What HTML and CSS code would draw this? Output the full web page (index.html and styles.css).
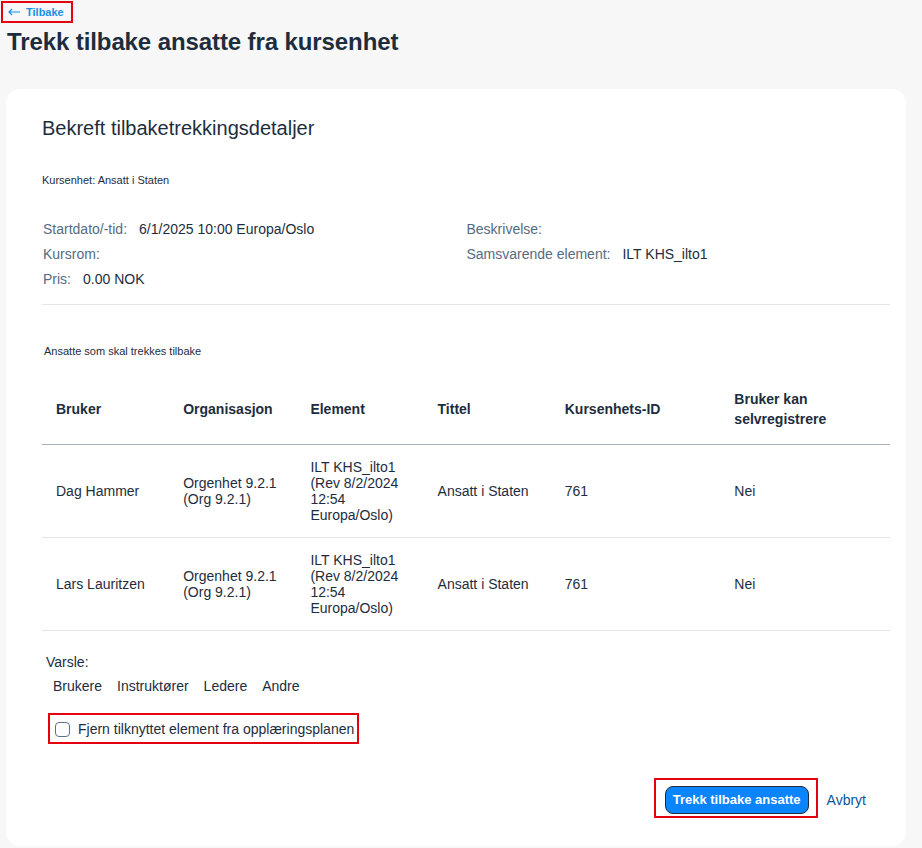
FILE: index.html
```html
<!DOCTYPE html>
<html lang="nb">
	<head>
		<meta charset="UTF-8" />
		<meta name="viewport" content="width=device-width, initial-scale=1.0" />
		<title>Trekk tilbake ansatte fra kursenhet</title>
		<link rel="stylesheet" href="styles.css">
	</head>
	<body>
		<div class="page">
			<a class="back-link" href="#">
				<svg class="back-arrow" width="12" height="8" viewBox="0 0 12 8" fill="none" stroke="currentColor" stroke-width="1.2">
					<path d="M12 4H1M4 1L1 4l3 3" />
				</svg>
				Tilbake
			</a>
			<h1>Trekk tilbake ansatte fra kursenhet</h1>

			<div class="card">
				<h2>Bekreft tilbaketrekkingsdetaljer</h2>
				<p class="small-label">Kursenhet: Ansatt i Staten</p>

				<div class="details">
					<div class="details-col">
						<div class="detail"><span class="label">Startdato/-tid:</span><span>6/1/2025 10:00 Europa/Oslo</span></div>
						<div class="detail"><span class="label">Kursrom:</span></div>
						<div class="detail"><span class="label">Pris:</span><span>0.00 NOK</span></div>
					</div>
					<div class="details-col">
						<div class="detail"><span class="label">Beskrivelse:</span></div>
						<div class="detail"><span class="label">Samsvarende element:</span><span>ILT KHS_ilto1</span></div>
					</div>
				</div>

				<p class="small-label table-caption">Ansatte som skal trekkes tilbake</p>

				<table class="users">
					<thead>
						<tr>
							<th>Bruker</th>
							<th>Organisasjon</th>
							<th>Element</th>
							<th>Tittel</th>
							<th class="wide">Kursenhets-ID</th>
							<th class="wide">Bruker kan<br>selvregistrere</th>
						</tr>
					</thead>
					<tbody>
						<tr>
							<td>Dag Hammer</td>
							<td>Orgenhet 9.2.1<br>(Org 9.2.1)</td>
							<td>ILT KHS_ilto1<br>(Rev 8/2/2024<br>12:54<br>Europa/Oslo)</td>
							<td>Ansatt i Staten</td>
							<td>761</td>
							<td>Nei</td>
						</tr>
						<tr>
							<td>Lars Lauritzen</td>
							<td>Orgenhet 9.2.1<br>(Org 9.2.1)</td>
							<td>ILT KHS_ilto1<br>(Rev 8/2/2024<br>12:54<br>Europa/Oslo)</td>
							<td>Ansatt i Staten</td>
							<td>761</td>
							<td>Nei</td>
						</tr>
					</tbody>
				</table>

				<div class="notify">
					<div class="notify-title">Varsle:</div>
					<div class="notify-options">
						<span>Brukere</span>
						<span>Instruktører</span>
						<span>Ledere</span>
						<span>Andre</span>
					</div>
				</div>

				<label class="check-row marked">
					<input type="checkbox" />
					<span>Fjern tilknyttet element fra opplæringsplanen</span>
				</label>

				<div class="actions">
					<div class="marked btn-wrap">
						<button class="primary-btn">Trekk tilbake ansatte</button>
					</div>
					<button class="link-btn">Avbryt</button>
				</div>
			</div>
		</div>
	</body>
</html>
```

FILE: styles.css
```css
* {
	margin: 0;
	padding: 0;
	box-sizing: border-box;
}

body {
	font-family: 'Liberation Sans', Arial, sans-serif;
	background: #f7f7f7;
	color: #1d2d3e;
	font-size: 14px;
}

.page {
	padding: 1px 16px 3px 6px;
}

.back-link {
	display: inline-flex;
	align-items: center;
	gap: 6px;
	margin-left: -5px;
	padding: 2px 7px 2px 5px;
	border: 2px solid #e4000f;
	color: #1b8ee8;
	font-size: 11px;
	font-weight: bold;
	text-decoration: none;
	line-height: 14px;
}

.back-arrow {
	display: block;
}

h1 {
	font-size: 24px;
	font-weight: bold;
	line-height: 30px;
	margin: 4px 0 0 1px;
	color: #1d2d3e;
	letter-spacing: -0.1px;
}

.card {
	margin-top: 32px;
	background: #fff;
	border-radius: 14px;
	padding: 27px 16px 28px 36px;
}

h2 {
	font-size: 20px;
	font-weight: normal;
	line-height: 24px;
}

.small-label {
	font-size: 11px;
	line-height: 14px;
	margin-top: 33px;
}

.details {
	display: flex;
	margin-top: 30px;
	padding: 0 0 12px 1px;
	border-bottom: 1px solid #e5e5e5;
}

.details-col {
	width: 424px;
}

.detail {
	display: flex;
	gap: 12px;
	line-height: 25px;
}

.label {
	color: #556b82;
}

.table-caption {
	margin-top: 39px;
	margin-left: 2px;
}

.users {
	width: 100%;
	margin-top: 17px;
	border-collapse: collapse;
	table-layout: fixed;
}

.users th {
	width: 15%;
	text-align: left;
	font-weight: bold;
	line-height: 20px;
	padding: 14px 14px 15px;
	border-bottom: 1px solid #a8b3bd;
}

.users th.wide {
	width: 20%;
}

.users td {
	line-height: 16px;
	padding: 14px;
	height: 93px;
	border-bottom: 1px solid #e5e5e5;
	vertical-align: middle;
}

.notify {
	margin-top: 22px;
	padding-left: 4px;
	line-height: 18px;
}

.notify-options {
	display: flex;
	gap: 15px;
	margin-top: 6px;
	padding-left: 7px;
}

.marked {
	border: 2px solid #e4000f;
}

.check-row {
	display: inline-flex;
	align-items: center;
	gap: 8px;
	margin: 18px 0 0 6px;
	padding: 5px 3px 4px 5px;
	line-height: 18px;
}

.check-row input {
	appearance: none;
	width: 15px;
	height: 15px;
	border: 1px solid #5b738b;
	border-radius: 4px;
	background: #fff;
}

.actions {
	display: flex;
	justify-content: flex-end;
	align-items: center;
	gap: 7px;
	margin-top: 34px;
	padding-right: 22px;
}

.btn-wrap {
	padding: 6px 7px 2px 9px;
}

.primary-btn {
	font-family: inherit;
	background: #0a84ff;
	color: #fff;
	border: 1px solid #1d2d3e;
	border-radius: 8px;
	padding: 3px 7px;
	font-size: 13px;
	font-weight: bold;
	line-height: 20px;
}

.link-btn {
	font-family: inherit;
	background: none;
	border: none;
	color: #0a5599;
	font-size: 14px;
	padding: 4px 2px 0;
}
```
